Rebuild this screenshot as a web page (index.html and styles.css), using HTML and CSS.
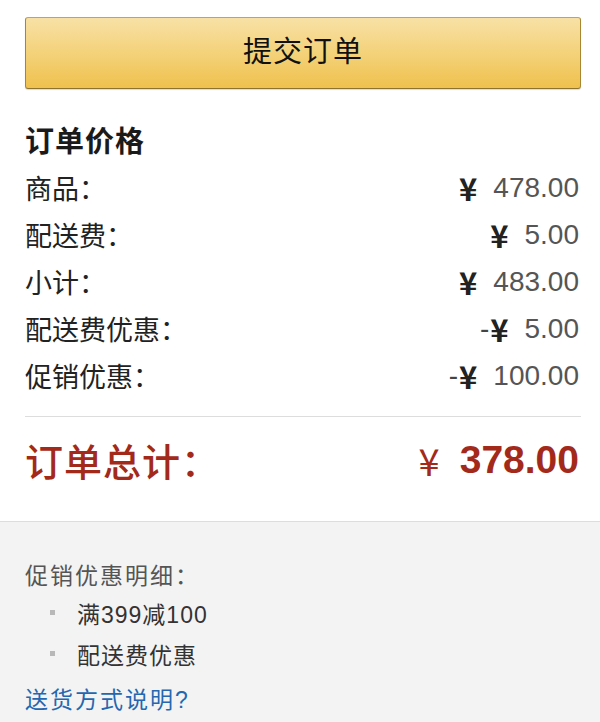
FILE: index.html
```html
<!DOCTYPE html>
<html lang="zh-CN">
<head>
<meta charset="utf-8">
<title>订单价格</title>
<link rel="stylesheet" href="styles.css">
</head>
<body>
<div class="page">
  <section class="summary">
    <button class="submit" type="button">提交订单</button>
    <h2 class="title">订单价格</h2>
    <div class="rows">
      <div class="row"><span class="label">商品：</span><span class="value"><span class="cur">¥</span><span class="num">478.00</span></span></div>
      <div class="row"><span class="label">配送费：</span><span class="value"><span class="cur">¥</span><span class="num">5.00</span></span></div>
      <div class="row"><span class="label">小计：</span><span class="value"><span class="cur">¥</span><span class="num">483.00</span></span></div>
      <div class="row"><span class="label">配送费优惠：</span><span class="value"><span class="minus">-</span><span class="cur">¥</span><span class="num">5.00</span></span></div>
      <div class="row"><span class="label">促销优惠：</span><span class="value"><span class="minus">-</span><span class="cur">¥</span><span class="num">100.00</span></span></div>
    </div>
    <div class="divider"></div>
    <div class="total"><span class="total-label">订单总计：</span><span class="total-value"><span class="total-cur">¥</span><span class="total-num">378.00</span></span></div>
  </section>
  <section class="details">
    <div class="details-title">促销优惠明细：</div>
    <ul class="promo-list">
      <li class="promo-item"><span class="bullet"></span><span class="promo-text">满399减100</span></li>
      <li class="promo-item"><span class="bullet"></span><span class="promo-text">配送费优惠</span></li>
    </ul>
    <a class="ship-link" href="#">送货方式说明?</a>
  </section>
</div>
</body>
</html>
```
FILE: styles.css
```css
html, body {
  margin: 0;
  padding: 0;
  background: #ffffff;
}
body {
  font-family: "Liberation Sans", "Noto Sans CJK SC", sans-serif;
  color: #222;
}
.page {
  width: 600px;
  height: 722px;
  overflow: hidden;
  display: flex;
  flex-direction: column;
}
.summary {
  padding: 17px 19px 31px 25px;
}
.submit {
  display: block;
  width: 556px;
  height: 72px;
  margin: 0;
  padding: 0 0 9px 0;
  border: 1px solid #a88734;
  border-color: #c2a457 #a88734 #8c7330;
  border-radius: 3px;
  background: linear-gradient(to bottom, #f8e1a6 0%, #f3cf71 60%, #efc14d 100%);
  box-shadow: 0 1px 1px rgba(0, 0, 0, 0.15);
  font-family: "Noto Sans CJK SC", sans-serif;
  font-size: 29px;
  color: #111;
  letter-spacing: 1px;
  cursor: pointer;
}
.title {
  margin: 32px 0 0 0;
  font-family: "Noto Sans CJK SC", sans-serif;
  font-size: 29px;
  font-weight: 700;
  line-height: 36px;
  color: #1a1a1a;
  letter-spacing: 1px;
}
.rows {
  margin-top: 7px;
}
.row {
  display: flex;
  justify-content: space-between;
  align-items: center;
  height: 47px;
}
.label {
  font-family: "Noto Sans CJK SC", sans-serif;
  font-size: 27px;
  color: #222;
  line-height: 47px;
}
.value {
  display: flex;
  align-items: center;
  line-height: 47px;
}
.cur {
  font-family: "Noto Sans CJK SC", sans-serif;
  font-size: 31px;
  font-weight: 700;
  color: #222;
  margin-right: 16px;
}
.minus {
  font-family: "Liberation Sans", sans-serif;
  font-size: 28px;
  color: #444;
  margin-right: 1px;
}
.num {
  font-family: "Liberation Sans", sans-serif;
  font-size: 28px;
  color: #555;
  margin-right: 2px;
}
.divider {
  margin-top: 17px;
  height: 1px;
  background: #dddddd;
}
.total {
  margin-top: 13px;
  height: 60px;
  display: flex;
  justify-content: space-between;
  align-items: center;
  color: #a3291a;
}
.total-label {
  font-family: "Noto Sans CJK SC", sans-serif;
  font-size: 38px;
  font-weight: 500;
  letter-spacing: 1px;
  line-height: 60px;
}
.total-value {
  display: flex;
  align-items: center;
  line-height: 60px;
}
.total-cur {
  font-family: "Noto Sans CJK SC", sans-serif;
  font-size: 38px;
  font-weight: 400;
  margin-right: 20px;
}
.total-num {
  font-family: "Liberation Sans", sans-serif;
  font-size: 39px;
  font-weight: 700;
  margin-right: 2px;
}
.details {
  flex: 1;
  border-top: 1px solid #dddddd;
  background: #f3f3f3;
  padding: 34px 19px 0 25px;
}
.details-title {
  font-family: "Noto Sans CJK SC", sans-serif;
  font-size: 23px;
  line-height: 36px;
  color: #555;
  letter-spacing: 2px;
}
.promo-list {
  list-style: none;
  margin: 0;
  padding: 0;
}
.promo-item {
  display: flex;
  align-items: center;
  height: 41px;
}
.bullet {
  width: 5px;
  height: 5px;
  background: #b8b8b8;
  margin-left: 25px;
  margin-right: 22px;
}
.promo-text {
  font-family: "Liberation Sans", "Noto Sans CJK SC", sans-serif;
  font-size: 23px;
  color: #333;
  letter-spacing: 1px;
}
.ship-link {
  display: block;
  line-height: 52px;
  font-family: "Liberation Sans", "Noto Sans CJK SC", sans-serif;
  font-size: 23px;
  color: #2467b0;
  text-decoration: none;
  letter-spacing: 2px;
}
```
